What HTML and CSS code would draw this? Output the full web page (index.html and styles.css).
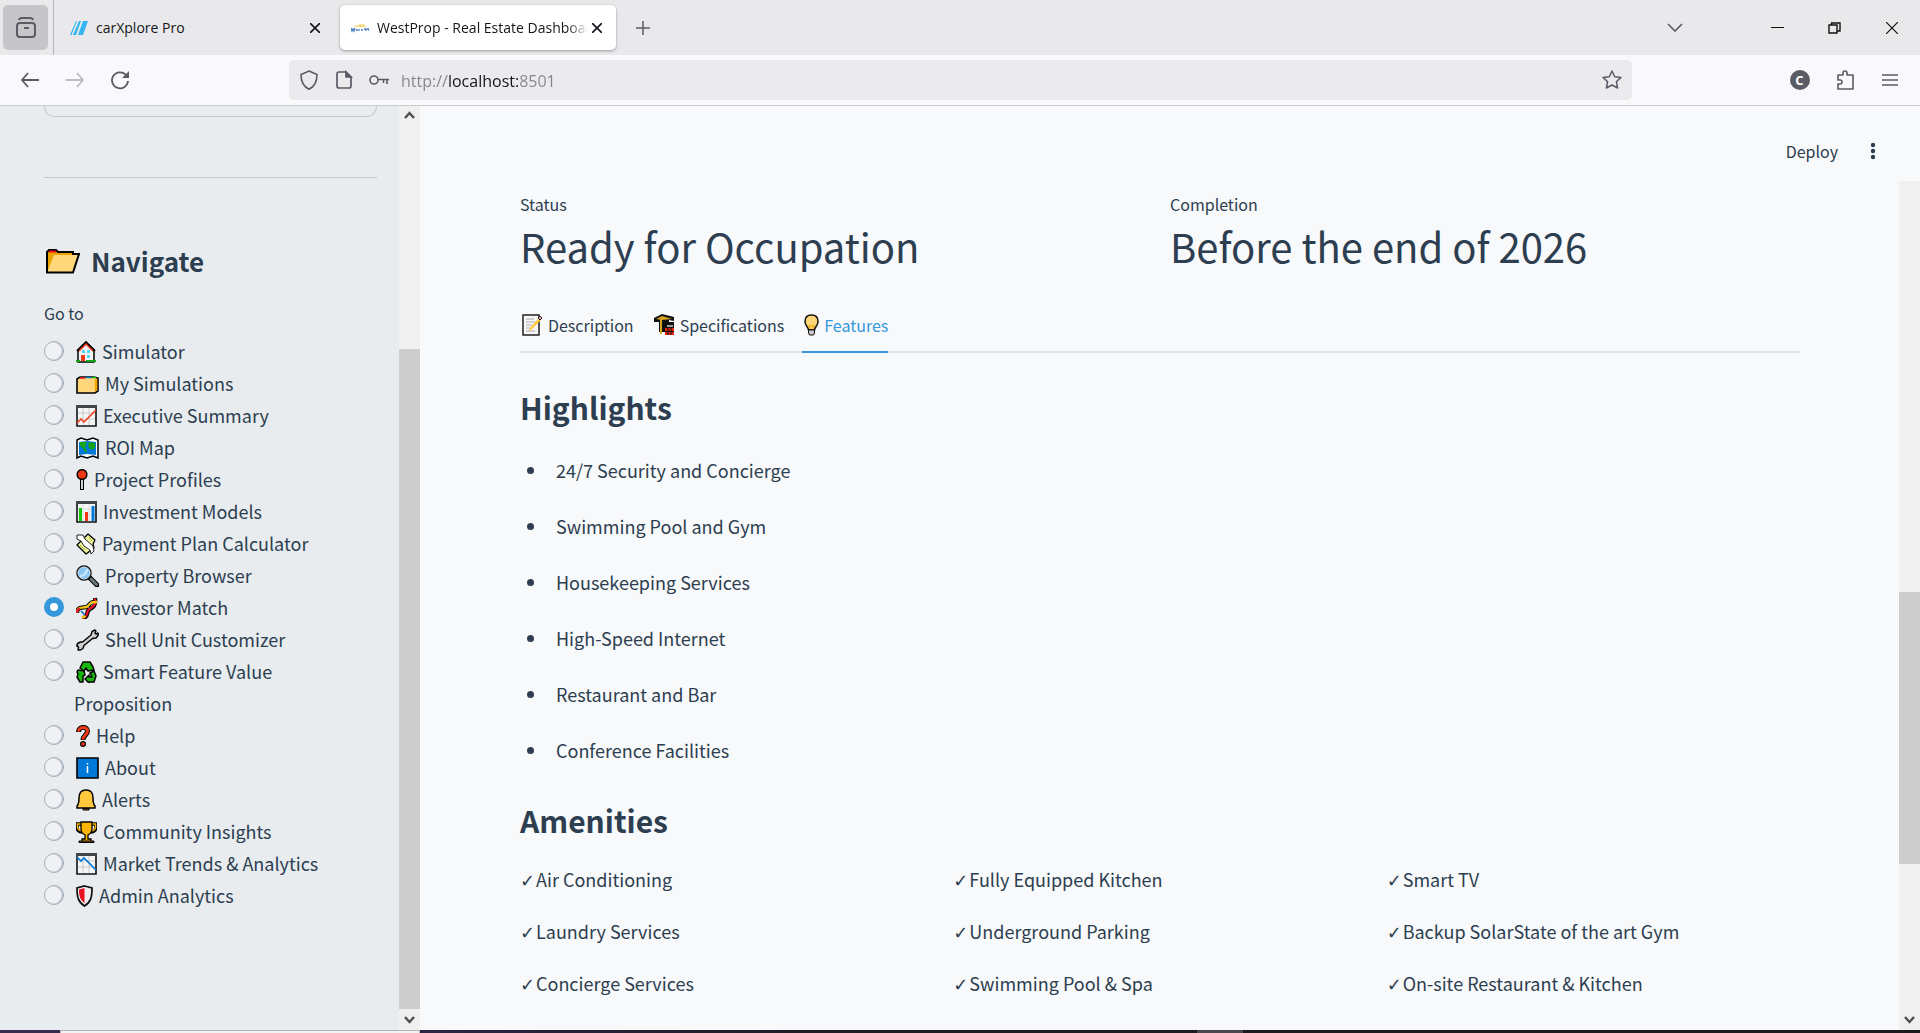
FILE: index.html
```html
<!DOCTYPE html>
<html lang="en">
<head>
<meta charset="utf-8">
<meta name="viewport" content="width=device-width, initial-scale=1">
<title>WestProp - Real Estate Dashboard</title>
<link rel="stylesheet" href="styles.css">
</head>
<body>
<header class="browser">
  <div class="tabstrip">
    <button class="tab-history" aria-label="Recent browsing"><svg width="22" height="24" viewBox="0 0 22 24" fill="none" stroke="#5b5b66" stroke-width="2"><path d="M4 4C4.500 2 6 2 7 2h8c1 0 2.500 0 3 2"/><rect x="2" y="7" width="18" height="14" rx="3"/><path d="M9 12h5"/></svg></button>
    <div class="tab">
      <svg width="18" height="14" viewBox="0 0 18 14" fill="#35b5f0"><path d="M6 0h1L1.500 14H0zM9 0h2L6 14H3zM13 0h5l-5 14H8z"/></svg>
      <span class="tab-title">carXplore Pro</span>
      <button class="tab-close" aria-label="Close tab"><svg width="10" height="10" viewBox="0 0 10 10" stroke="#15141a" stroke-width="1.600"><path d="M0 0l10 10M10 0L0 10"/></svg></button>
    </div>
    <div class="tab tab-active">
      <svg width="18" height="10" viewBox="0 0 18 10" fill="none"><path d="M3 4l2-2 2 1 2-3 2 2 2-1 2 3z" fill="#f4d77c"/><path d="M0 5l1 3 1-2 1 2 1-3M5 7h2M8 6v2M10 7h2M13 6h2v2M16 6h2v2" stroke="#477fc0" stroke-width="1.300"/></svg>
      <span class="tab-title tab-title-fade">WestProp - Real Estate Dashboard</span>
      <button class="tab-close" aria-label="Close tab"><svg width="10" height="10" viewBox="0 0 10 10" stroke="#15141a" stroke-width="1.600"><path d="M0 0l10 10M10 0L0 10"/></svg></button>
    </div>
    <button class="icon-btn" aria-label="New tab"><svg width="14" height="14" viewBox="0 0 14 14" stroke="#5b5b66" stroke-width="1.500"><path d="M7 0v14M0 7h14"/></svg></button>
    <div class="window-controls">
      <button class="icon-btn chevron" aria-label="List all tabs"><svg width="16" height="9" viewBox="0 0 16 9" fill="none" stroke="#5b5b66" stroke-width="1.600"><path d="M1 1l7 7 7-7"/></svg></button>
      <button class="icon-btn" aria-label="Minimize"><svg width="13" height="12" viewBox="0 0 13 12" stroke="#111" stroke-width="1"><path d="M0 5.500h13"/></svg></button>
      <button class="icon-btn" aria-label="Restore"><svg width="13" height="12" viewBox="0 0 13 12" fill="none" stroke="#111" stroke-width="1.400"><path d="M1 3h8v8H1zM3.500 3V1H12v8H9"/></svg></button>
      <button class="icon-btn" aria-label="Close"><svg width="12" height="12" viewBox="0 0 12 12" stroke="#111" stroke-width="1.200"><path d="M0 0l12 12M12 0L0 12"/></svg></button>
    </div>
  </div>
  <div class="toolbar">
    <div class="nav-buttons">
      <button class="icon-btn" aria-label="Back"><svg width="20" height="16" viewBox="0 0 20 16" fill="none" stroke="#5b5b66" stroke-width="1.800"><path d="M8 1L2 8l6 7M2 8h17"/></svg></button>
      <button class="icon-btn" aria-label="Forward"><svg width="20" height="16" viewBox="0 0 20 16" fill="none" stroke="#bcbcc1" stroke-width="1.800"><path d="M12 1l6 7-6 7M18 8H1"/></svg></button>
      <button class="icon-btn" aria-label="Reload"><svg width="20" height="20" viewBox="0 0 20 20" fill="none"><path d="M15.500 4.500A8 8 0 1 0 18 11" stroke="#5b5b66" stroke-width="1.800"/><path d="M19 1v7h-7z" fill="#5b5b66"/></svg></button>
    </div>
    <div class="urlbar">
      <svg width="20" height="20" viewBox="0 0 20 20" fill="none" stroke="#5b5b66" stroke-width="1.600"><path d="M10 1l8 3.500c0 7-2 12-8 14.700C4 16.500 2 11.500 2 4.500z"/></svg>
      <svg width="20" height="20" viewBox="0 0 20 20" fill="none" stroke="#5b5b66" stroke-width="1.700"><path d="M5 2h7l5 5v9a2 2 0 0 1-2 2H5a2 2 0 0 1-2-2V4a2 2 0 0 1 2-2z"/><path d="M12 2v5h5z" fill="#5b5b66"/></svg>
      <svg width="20" height="20" viewBox="0 0 20 20" fill="none" stroke="#5b5b66" stroke-width="1.600"><circle cx="5" cy="10" r="4"/><path d="M9 9.500h11M14.500 10v3M18 10v4"/></svg>
      <input class="url" type="text" aria-label="Address" value="http://localhost:8501">
      <svg width="20" height="20" viewBox="0 0 20 20" fill="none" stroke="#5b5b66" stroke-width="1.500" stroke-linejoin="round"><path d="M10 1l2.700 5.700 6.300.7-4.600 4.300L15.600 18 10 15l-5.600 3 1.200-6.300L1 7.400l6.300-.7z"/></svg>
    </div>
    <div class="tools">
      <button class="icon-btn" aria-label="Account"><span class="avatar">C</span></button>
      <button class="icon-btn" aria-label="Extensions"><svg width="20" height="22" viewBox="0 0 20 22" fill="none" stroke="#5b5b66" stroke-width="1.600" stroke-linejoin="round"><path d="M3 6h5V4a2 2 0 0 1 4 0v2h6v14H3v-5h2a2 2 0 0 0 0-4H3z"/></svg></button>
      <button class="icon-btn" aria-label="Menu"><svg width="16" height="14" viewBox="0 0 16 14" stroke="#5b5b66" stroke-width="1.500"><path d="M0 2h16M0 7h16M0 12h16"/></svg></button>
    </div>
  </div>
</header>

<div class="app">
  <aside class="sidebar">
    <div class="sidebar-body">
      <div class="panel-end"></div>
      <hr class="divider">
      <h2 class="nav-title"><svg width="34" height="25" viewBox="0 0 34 25" stroke="#000" stroke-width="2"><path d="M1 23V3l2-2h7l2 2h15v4" fill="#eaa300"/><path d="M3 2.500h7" stroke="#e81224"/><path d="M8 6h24.500l-6.500 17.500H1z" fill="#ffd679" stroke="none"/><path d="M1 3v20.500h26L33 5h-5" fill="none"/></svg>Navigate</h2>
      <fieldset class="nav-group">
        <legend class="label">Go to</legend>
        <label class="nav-item"><input type="radio" name="page"><span><svg width="20" height="22" viewBox="0 0 20 22"><path d="M2 9v12h16V9l-8-8z" fill="#f2f2f2" stroke="#000" stroke-width="1.500"/><path d="M1 10l9-8.500L19 10" fill="none" stroke="#000" stroke-width="2"/><path d="M3 10l7-7 7 7" fill="none" stroke="#f03a17" stroke-width="1.500"/><path d="M6 9h3v3H6zM11 9h3v3h-3zM11 14h3v3h-3z" fill="#50d9f5"/><path d="M5 14h4v6H5z" fill="#f03a17"/><path d="M0 19h4v2H0zM10 19h10v2H10z" fill="#16a318"/></svg> Simulator</span></label>
        <label class="nav-item"><input type="radio" name="page"><span><svg width="23" height="22" viewBox="0 0 23 22"><path d="M1 6l3-2h14l4 1v13l-3 2H1z" fill="#ffd679" stroke="#000" stroke-width="1.600"/><path d="M4 5h5" stroke="#e81224" stroke-width="1.500"/><path d="M10 4.500h5" stroke="#0078d7" stroke-width="1.500"/><path d="M16 4.500h4" stroke="#16c60c" stroke-width="1.500"/><path d="M20 6v12" stroke="#f7a500" stroke-width="2.500"/></svg> My Simulations</span></label>
        <label class="nav-item"><input type="radio" name="page"><span><svg width="21" height="22" viewBox="0 0 21 22"><path d="M1 1h19v20H1z" fill="#f5f5f5" stroke="#111" stroke-width="1.600"/><path d="M7 2v18M13 2v18M2 8h17M2 14h17" stroke="#ccc"/><path d="M0 1.500h21" stroke="#444" stroke-width="3"/><path d="M1 18l4-4 3 3L20 5" fill="none" stroke="#f03a17" stroke-width="1.500"/></svg> Executive Summary</span></label>
        <label class="nav-item"><input type="radio" name="page"><span><svg width="23" height="22" viewBox="0 0 23 22"><path d="M1 3l4-2 6 2 6-2 5 2v18l-5-2-6 2-6-2-4 2z" fill="#fff" stroke="#000" stroke-width="1.500"/><path d="M3 5l8-1 9 1v13l-9-1-8 1z" fill="#0078d7"/><path d="M4 5h7l-2 5 2 4-2 2-2-5-3-2zM13 5l6 1v5l-4 2-3-4z" fill="#16a318"/></svg> ROI Map</span></label>
        <label class="nav-item"><input type="radio" name="page"><span><svg width="12" height="22" viewBox="0 0 12 22"><path d="M6 10v11" stroke="#000" stroke-width="4"/><path d="M6 10v10" stroke="#ccc" stroke-width="2"/><circle cx="6" cy="5.500" r="4.800" fill="#f03a17" stroke="#000" stroke-width="1.500"/></svg> Project Profiles</span></label>
        <label class="nav-item"><input type="radio" name="page"><span><svg width="21" height="22" viewBox="0 0 21 22"><path d="M1 1h19v20H1z" fill="#f5f5f5" stroke="#111" stroke-width="1.600"/><path d="M7 2v18M13 2v18M2 8h17M2 14h17" stroke="#ddd"/><path d="M0 1.500h21" stroke="#444" stroke-width="3"/><path d="M4.500 20V7" stroke="#16c60c" stroke-width="3"/><path d="M10.500 20v-9" stroke="#f03a17" stroke-width="3"/><path d="M17 20V5" stroke="#0078d7" stroke-width="3"/></svg> Investment Models</span></label>
        <label class="nav-item"><input type="radio" name="page"><span><svg width="20" height="22" viewBox="0 0 20 22" stroke-linejoin="round"><path d="M12 1l7 6-2 4 1 4-8 6-9-9 4-4z" fill="#eef29a" stroke="#000" stroke-width="1.300"/><path d="M8 6l6 6M13 4l3 4M4 12l5 5" stroke="#a9b52f" fill="none"/><path d="M1 2h6l2 4 8 7 1 5-3 3-1-4-6-4-3-5-4-2z" fill="#fff" stroke="#222" stroke-width="1"/></svg> Payment Plan Calculator</span></label>
        <label class="nav-item"><input type="radio" name="page"><span><svg width="23" height="22" viewBox="0 0 23 22"><path d="M13 12l8 8" stroke="#000" stroke-width="5" stroke-linecap="round"/><path d="M15 14l5.500 5.500" stroke="#69797e" stroke-width="3" stroke-linecap="round"/><circle cx="8" cy="8" r="7" fill="#85c4f5" stroke="#111" stroke-width="1.500"/><path d="M4 11c4 0 7-3 7-7" stroke="#c3e3fb" stroke-width="3" fill="none"/><circle cx="8" cy="8" r="6" fill="none" stroke="#cfd6da"/></svg> Property Browser</span></label>
        <label class="nav-item"><input type="radio" name="page" checked><span><svg width="23" height="22" viewBox="0 0 23 22" fill="none"><path d="M1 16C1 8 10 12 12 9s4-5 9-4M6 21c8 0 3-7 8-9s6-5 5-11" stroke="#000" stroke-width="4.200"/><path d="M5 14l4 4M11 9l4 4M14 5l4 4" stroke="#0063b1" stroke-width="1.500"/><path d="M1 15.500C1 8 10 12 12 9s4-5 9-4" stroke="#f9c513" stroke-width="2.300"/><path d="M6 20.500c8 0 3-7 8-9s6-5 5-10" stroke="#e81224" stroke-width="2.300"/><path d="M15 6c2-1 4-1 6-1M5.500 20.500c2 0 3-.5 4-1.500" stroke="#f9c513" stroke-width="2.300"/><path d="M1 15.500c0-2 1-3.500 3-4" stroke="#e81224" stroke-width="2.300"/></svg> Investor Match</span></label>
        <label class="nav-item"><input type="radio" name="page"><span><svg width="23" height="22" viewBox="0 0 23 22"><path d="M16 2.500l3-1.500 1 1-1 2 1 1 2-1 .5 2-2.500 3-3.500.5L8 16.500l-1 3L4.500 21 2 21l.5-2.500-1-1.500H.7l.8-2.500 3-1.500 2 0L15 6z" fill="#ccc" stroke="#000" stroke-width="1.400" stroke-linejoin="round"/></svg> Shell Unit Customizer</span></label>
        <label class="nav-item"><input type="radio" name="page"><span><svg width="21" height="22" viewBox="0 0 21 22" fill="#16b80f" stroke="#000" stroke-width="1.500" stroke-linejoin="round"><path d="M7 1h7l3 5 1 3-6 1-2-3-2 3-4-3z"/><path d="M2 9l6 1 1 4-2 1v6H4l-3-5 1-3-1-2z"/><path d="M14 12l4-2 2 5-2 6h-5v1l-4-4 4-4v2h3z"/></svg> Smart Feature Value Proposition</span></label>
        <label class="nav-item"><input type="radio" name="page"><span><svg width="14" height="22" viewBox="0 0 14 22" fill="none"><path d="M2.500 7c0-6 9-6 9-1 0 4-4.500 4-4.500 9" stroke="#000" stroke-width="5"/><circle cx="7" cy="19" r="3" fill="#000"/><path d="M2.500 6.500c0-5 9-5.500 9-.5 0 4-4.500 4-4.500 8.500" stroke="#f03a17" stroke-width="3"/><circle cx="7" cy="19" r="1.800" fill="#f03a17"/></svg> Help</span></label>
        <label class="nav-item"><input type="radio" name="page"><span><svg width="23" height="22" viewBox="0 0 23 22"><path d="M1 1h21v20H1z" fill="#0078d7" stroke="#000" stroke-width="1.600"/><path d="M11.500 9v7" stroke="#fff" stroke-width="1.500"/><path d="M11.500 6v1.500" stroke="#fff" stroke-width="1.500"/></svg> About</span></label>
        <label class="nav-item"><input type="radio" name="page"><span><svg width="20" height="22" viewBox="0 0 20 22"><path d="M7 19h6v2H7z" fill="#8e562e" stroke="#000"/><path d="M10 1c5 0 7 3 7 8 0 4 0 6 2 8v2H1v-2c2-2 2-4 2-8 0-5 2-8 7-8z" fill="#ffc83d" stroke="#000" stroke-width="1.500"/></svg> Alerts</span></label>
        <label class="nav-item"><input type="radio" name="page"><span><svg width="21" height="22" viewBox="0 0 21 22"><path d="M5 3H1v3c0 3 2 5 5 5M16 3h4v3c0 3-2 5-5 5" fill="none" stroke="#000" stroke-width="3.500"/><path d="M5 3H1.500v3c0 2 2 4 4 4M16 3h3.500v3c0 2-2 4-4 4" fill="none" stroke="#fbb500" stroke-width="1.500"/><path d="M5 1h11v7c0 3-2 5-4 6v4h3v3H6v-3h3v-4c-2-1-4-3-4-6z" fill="#fbb500" stroke="#000" stroke-width="1.300"/><path d="M3 20h15v1.500H3z" fill="#8e562e" stroke="#000"/></svg> Community Insights</span></label>
        <label class="nav-item"><input type="radio" name="page"><span><svg width="21" height="22" viewBox="0 0 21 22"><path d="M1 1h19v20H1z" fill="#f5f5f5" stroke="#111" stroke-width="1.600"/><path d="M7 2v18M13 2v18M2 8h17M2 14h17" stroke="#ccc"/><path d="M0 1.500h21" stroke="#444" stroke-width="3"/><path d="M1 4l4 4 3-3 12 12" fill="none" stroke="#0078d7" stroke-width="1.600"/></svg> Market Trends &amp; Analytics</span></label>
        <label class="nav-item"><input type="radio" name="page"><span><svg width="17" height="22" viewBox="0 0 17 22"><path d="M8.500 1L16 3c0 9-1 14-7.500 18C2 17 1 12 1 3z" fill="#eee" stroke="#111" stroke-width="1.700"/><path d="M8.500 3v15C4 15 3 11 3 4.500z" fill="#e81224"/></svg> Admin Analytics</span></label>
      </fieldset>
    </div>
    <div class="scrollbar" aria-hidden="true">
      <svg class="arrow" viewBox="0 0 21 21" fill="none" stroke="#505050" stroke-width="2.500"><path d="M6 12l4.500-5 4.500 5"/></svg>
      <div class="track"><div class="thumb" style="margin-top:222px;height:660px"></div></div>
      <svg class="arrow" viewBox="0 0 21 21" fill="none" stroke="#505050" stroke-width="2.500"><path d="M6 8l4.500 5L15 8"/></svg>
    </div>
  </aside>

  <main class="main">
    <div class="app-header">
      <button class="deploy">Deploy</button>
      <button class="icon-btn kebab" aria-label="Options"><svg width="6" height="18" viewBox="0 0 6 18" fill="#2c3e50"><circle cx="3" cy="3" r="2.200"/><circle cx="3" cy="9" r="2.200"/><circle cx="3" cy="15" r="2.200"/></svg></button>
    </div>
    <div class="scroll-area">
      <div class="content">
        <div class="metrics">
          <div><div class="label">Status</div><div class="metric">Ready for Occupation</div></div>
          <div><div class="label">Completion</div><div class="metric">Before the end of 2026</div></div>
        </div>
        <div class="tabs" role="tablist">
          <button class="tab-btn" role="tab"><svg width="21" height="22" viewBox="0 0 21 22"><path d="M1 1h16v20H1z" fill="#f7f7f7" stroke="#222" stroke-width="1.500"/><path d="M4 5h8M4 8h9M4 11h6M4 14h4M4 17h9" stroke="#aaa"/><path d="M7 17l1-3L17 4l2 2L10 15z" fill="#ffc83d"/><path d="M16 4l2-2 2 2-2 2z" fill="#f4a0a8" stroke="#222"/></svg>Description</button>
          <button class="tab-btn" role="tab"><svg width="21" height="22" viewBox="0 0 21 22"><path d="M0 4l8-4 12 3v4l-5-1v2h5v10H5V8H0z" fill="#111"/><path d="M6 20V4h2v16M2 5l6-3 10 3-10 1z" fill="#d9a520"/><path d="M11 14h9v7h-9z" fill="#e02410"/><path d="M11 17.500h9M14 14v7M17 14v7" stroke="#111"/><path d="M13 12h6" stroke="#ccc" stroke-width="1.500"/></svg>Specifications</button>
          <button class="tab-btn tab-btn-active" role="tab" aria-selected="true"><svg width="15" height="22" viewBox="0 0 15 22"><path d="M7.500 1C3 1 1 4 1 7.500c0 4 3 5 3.500 8.500h6c.5-3.500 3.500-4.500 3.500-8.500C14 4 12 1 7.500 1z" fill="#ffd679" stroke="#111" stroke-width="1.500"/><path d="M5 11l1 4M10 11l-1 4M5 12h5" stroke="#f7a500"/><path d="M4.500 16h6v3l-1 2h-4l-1-2z" fill="#ccc" stroke="#111"/></svg>Features</button>
        </div>
        <h3 class="section-title">Highlights</h3>
        <ul class="highlights">
          <li>24/7 Security and Concierge</li>
          <li>Swimming Pool and Gym</li>
          <li>Housekeeping Services</li>
          <li>High-Speed Internet</li>
          <li>Restaurant and Bar</li>
          <li>Conference Facilities</li>
        </ul>
        <h3 class="section-title">Amenities</h3>
        <div class="amenities">
          <p><span class="check">✓</span>Air Conditioning</p>
          <p><span class="check">✓</span>Fully Equipped Kitchen</p>
          <p><span class="check">✓</span>Smart TV</p>
          <p><span class="check">✓</span>Laundry Services</p>
          <p><span class="check">✓</span>Underground Parking</p>
          <p><span class="check">✓</span>Backup SolarState of the art Gym</p>
          <p><span class="check">✓</span>Concierge Services</p>
          <p><span class="check">✓</span>Swimming Pool &amp; Spa</p>
          <p><span class="check">✓</span>On-site Restaurant &amp; Kitchen</p>
        </div>
      </div>
      <div class="scrollbar" aria-hidden="true">
        <div class="track"><div class="thumb" style="margin-top:411px;height:272px"></div></div>
        <svg class="arrow" viewBox="0 0 21 21" fill="none" stroke="#505050" stroke-width="2.500"><path d="M6 8l4.500 5L15 8"/></svg>
      </div>
    </div>
  </main>
</div>
<footer class="taskbar"><div class="taskbar-start"></div><div class="taskbar-search"></div><div class="taskbar-apps"></div><div class="taskbar-current"></div><div class="taskbar-tray"></div></footer>
</body>
</html>
```
FILE: styles.css
```css
* { box-sizing: border-box; }
body {
  margin: 0;
  height: 100vh;
  display: flex;
  flex-direction: column;
  overflow: hidden;
  background: #f8f9fb;
  color: #2c3e50;
  font: 18px/32px "Noto Sans CJK SC", "Noto Sans", sans-serif;
}
button { border: 0; padding: 0; margin: 0; background: none; color: inherit; font: inherit; }
svg { display: block; flex: none; }
h2, h3, p, ul, fieldset, legend { margin: 0; padding: 0; border: 0; }

/* Browser window */
.browser { flex: none; border-bottom: 1px solid #cccccf; font-family: "Open Sans", "Noto Sans", sans-serif; color: #15141a; }
.tabstrip { display: flex; align-items: center; height: 55px; padding-left: 3px; background: #e9e9eb; }
.tab-history { display: grid; place-items: center; flex: none; width: 45px; height: 45px; border-radius: 5px; background: #c6c6c8; }
.tab { display: flex; align-items: center; gap: 8px; width: 276px; height: 45px; padding: 0 14px 0 11px; border-radius: 5px; }
.tab:not(.tab-active) { width: 282px; height: 55px; margin: 0 5px; padding-left: 16px; padding-right: 15px; border-left: 1px solid #b6b6b9; border-radius: 0; }
.tab-active { background: #fff; box-shadow: 0 1px 3px #9a9aa0; }
.tab-title { flex: 1; min-width: 0; overflow: hidden; white-space: nowrap; font-size: 14px; line-height: 24px; }
.tab-title-fade { mask-image: linear-gradient(to right, #000 90%, transparent); }
.tab-close { flex: none; margin-left: -4px; }
.icon-btn { display: grid; place-items: center; flex: none; width: 45px; height: 40px; }
.tab-active + .icon-btn { margin-left: 4px; }
.window-controls { display: flex; margin-left: auto; }
.window-controls .icon-btn { width: 57px; }
.window-controls .chevron { margin-right: 46px; }
.toolbar { display: flex; align-items: center; height: 50px; background: #f9f9fb; }
.nav-buttons { display: flex; flex: none; width: 289px; padding-left: 7px; }
.urlbar { display: flex; align-items: center; flex: 1; gap: 15px; height: 40px; padding: 0 10px; border-radius: 5px; background: #ebebed; }
.url {
  flex: 1; min-width: 0; height: 34px; margin-left: -3px; padding: 2px 0 0; border: 0; outline: 0;
  color: transparent; font: 16px/32px "Open Sans", "Noto Sans", sans-serif;
  background: linear-gradient(to right, #85858c 48px, #15141a 48px, #15141a 118px, #85858c 118px);
  background-clip: text; -webkit-background-clip: text;
}
.tools { display: flex; justify-content: flex-end; flex: none; width: 288px; padding-right: 8px; }
.avatar { display: grid; place-items: center; width: 20px; height: 20px; border-radius: 50%; background: #5b5b66; color: #fff; font: bold 13px/20px "Open Sans", sans-serif; }

/* App shell */
.app { display: flex; flex: 1; min-height: 0; }
.sidebar { display: flex; flex: none; width: 420px; background: #e8ecef; }
.sidebar-body { flex: 1; min-width: 0; padding: 0 22px 0 44px; overflow: hidden; }
.panel-end { height: 11px; border: 1px solid #c3c9d0; border-top: 0; border-radius: 0 0 10px 10px; }
.divider { height: 1px; margin: 60px 0 65px; border: 0; background: #c3c9d0; }
.nav-title { display: flex; align-items: center; gap: 11px; padding-left: 2px; font-size: 26px; line-height: 36px; font-weight: 600; }
.label { font-size: 16px; line-height: 26px; }
.nav-group { margin-top: 21px; }
.nav-group .label { margin-bottom: 9px; }
.nav-item { display: flex; gap: 10px; padding-right: 10px; }
.nav-item svg { display: inline-block; margin: 0 2px; vertical-align: -4px; }
.nav-item input {
  appearance: none; flex: none; width: 20px; height: 20px; margin: 6px 0; border-radius: 50%;
  border: 1px solid #a3adb8; background: #eff1f4; box-shadow: inset -1px 0 1px #a3adb8;
}
.nav-item input:checked { border: 6px solid #3498db; background: #fff; box-shadow: none; }

.scrollbar { display: flex; flex-direction: column; flex: none; width: 21px; background: #f0f0f0; }
.arrow { width: 21px; height: 21px; }
.track { flex: 1; min-height: 0; overflow: hidden; display: flow-root; }
.thumb { background: #cdcdcd; }

.main { display: flex; flex: 1; flex-direction: column; min-width: 0; }
.app-header { display: flex; align-items: center; justify-content: flex-end; flex: none; height: 75px; padding: 14px 25px 0 0; }
.deploy { font-size: 16px; line-height: 26px; }
.kebab { margin-left: 12px; }
.scroll-area { display: flex; flex: 1; min-height: 0; }
.content { flex: 1; min-width: 0; padding: 10px 99px 0 100px; overflow: hidden; }
.metrics { display: grid; grid-template-columns: repeat(2, 1fr); gap: 20px; }
.metric { padding-top: 2px; font-size: 40px; line-height: 54px; }
.tabs { display: flex; gap: 18px; margin: 26px 0 33px; box-shadow: inset 0 -2px #e3e5e8; }
.tab-btn { display: flex; align-items: center; gap: 5px; height: 54px; padding-left: 2px; border-bottom: 2px solid transparent; font-size: 16px; line-height: 26px; }
.tab-btn-active { border-color: #3498db; color: #3498db; }
.section-title { font-size: 30px; line-height: 42px; font-weight: 600; }
.highlights { display: grid; gap: 24px; margin: 26px 0 33px; padding-left: 7px; list-style: none; }
.highlights li { display: flex; align-items: center; gap: 22px; }
.highlights li::before { content: ""; width: 7px; height: 7px; border-radius: 50%; background: #2c3e50; }
.amenities { display: grid; grid-template-columns: repeat(3, 1fr); gap: 20px; margin-top: 22px; }
.check { display: inline-block; width: 16px; font: 18px/18px "DejaVu Sans", sans-serif; }

/* Desktop taskbar edge */
.taskbar { display: flex; flex: none; height: 3px; background: #1c1a1e; }
.taskbar-start { width: 60px; background: #352d4b; }
.taskbar-search { width: 360px; border: 1px solid #b5b3b8; border-bottom: 0; background: #f3f2f3; }
.taskbar-apps { flex: 1; background: linear-gradient(to right, #2b2542, #1e1b20 60%); }
.taskbar-current { width: 46px; background: #4a484c; }
.taskbar-tray { width: 677px; }
```
